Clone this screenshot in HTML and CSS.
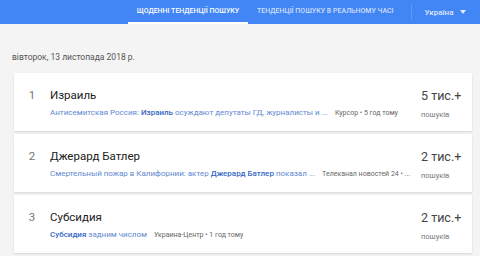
FILE: index.html
```html
<!DOCTYPE html>
<html lang="uk">
<head>
  <meta charset="UTF-8" />
  <title>Google Trends</title>
  <link rel="stylesheet" href="styles.css">
</head>
<body>

<div class="topbar">
  <div class="tabs">
    <div class="tab active">Щоденні тенденції пошуку</div>
    <div class="tab">Тенденції пошуку в реальному часі</div>
  </div>
  <div class="geo">Україна <span class="caret"></span></div>
</div>

<div class="content">
  <div class="date">вівторок, 13 листопада 2018 р.</div>

  <div class="card">
    <div class="rank">1</div>
    <div class="main">
      <div class="title">Израиль</div>
      <div class="sub">
        <span class="link">Антисемитская Россия: <b>Израиль</b> осуждают депутаты ГД, журналисты и ...</span>
        <span class="source">Курсор • 5 год тому</span>
      </div>
    </div>
    <div class="count">
      <div class="num">5 тис.+</div>
      <div class="label">пошуків</div>
    </div>
  </div>

  <div class="card">
    <div class="rank">2</div>
    <div class="main">
      <div class="title">Джерард Батлер</div>
      <div class="sub">
        <span class="link">Смертельный пожар в Калифорнии: актер <b>Джерард Батлер</b> показал ...</span>
        <span class="source">Телеканал новостей 24 • ...</span>
      </div>
    </div>
    <div class="count">
      <div class="num">2 тис.+</div>
      <div class="label">пошуків</div>
    </div>
  </div>

  <div class="card">
    <div class="rank">3</div>
    <div class="main">
      <div class="title">Субсидия</div>
      <div class="sub">
        <span class="link"><b>Субсидия</b> задним числом</span>
        <span class="source">Украина-Центр • 1 год тому</span>
      </div>
    </div>
    <div class="count">
      <div class="num">2 тис.+</div>
      <div class="label">пошуків</div>
    </div>
  </div>
</div>

</body>
</html>
```

FILE: styles.css
```css
body {
  margin: 0;
  background-color: #f4f4f4;
  font-family: Roboto, "Noto Sans", sans-serif;
  color: #212121;
  overflow: hidden;
}

.topbar {
  height: 24px;
  background-color: #4285f4;
  display: flex;
  align-items: stretch;
  padding-left: 128px;
}

.tabs {
  display: flex;
}

.tab {
  text-transform: uppercase;
  white-space: nowrap;
  font-size: 7px;
  font-weight: 500;
  color: rgba(255, 255, 255, 0.75);
  display: flex;
  align-items: center;
  padding: 0 9px;
  border-bottom: 2px solid transparent;
  box-sizing: border-box;
}

.tab.active {
  color: #fff;
  border-bottom-color: #fff;
  width: 120px;
  padding: 0;
  justify-content: center;
}

.geo {
  margin-left: 8px;
  padding-left: 13px;
  font-size: 8px;
  font-weight: 500;
  color: rgba(255, 255, 255, 0.85);
  display: flex;
  align-items: center;
  border-left: 1px solid rgba(255, 255, 255, 0.15);
  margin-top: 4px;
  margin-bottom: 4px;
}

.caret {
  width: 0;
  height: 0;
  border-left: 3px solid transparent;
  border-right: 3px solid transparent;
  border-top: 4px solid rgba(255, 255, 255, 0.85);
  margin-left: 7px;
}

.content {
  padding: 0 8px 0 14px;
}

.date {
  font-size: 8.5px;
  color: #555;
  margin: 28px 0 11px -2px;
}

.card {
  background-color: #fff;
  height: 58px;
  margin-bottom: 3px;
  box-shadow: 0 1px 2px rgba(0, 0, 0, 0.12);
  display: flex;
  align-items: flex-start;
  box-sizing: border-box;
  padding-top: 15px;
}

.rank {
  width: 36px;
  text-align: center;
  font-size: 11.5px;
  color: #757575;
  line-height: 15px;
}

.main {
  flex: 1;
}

.title {
  font-size: 11.5px;
  color: #212121;
  line-height: 15px;
}

.sub {
  margin-top: 5px;
  font-size: 8px;
  white-space: nowrap;
}

.link {
  color: #6189d0;
}

.link b {
  color: #3367c4;
  font-weight: 500;
}

.source {
  color: #666;
  font-size: 7px;
  margin-left: 5px;
}

.count {
  width: 51px;
}

.num {
  font-size: 12.5px;
  color: #444;
  line-height: 16px;
}

.label {
  font-size: 7.5px;
  color: #777;
  margin-top: 6px;
}
```
